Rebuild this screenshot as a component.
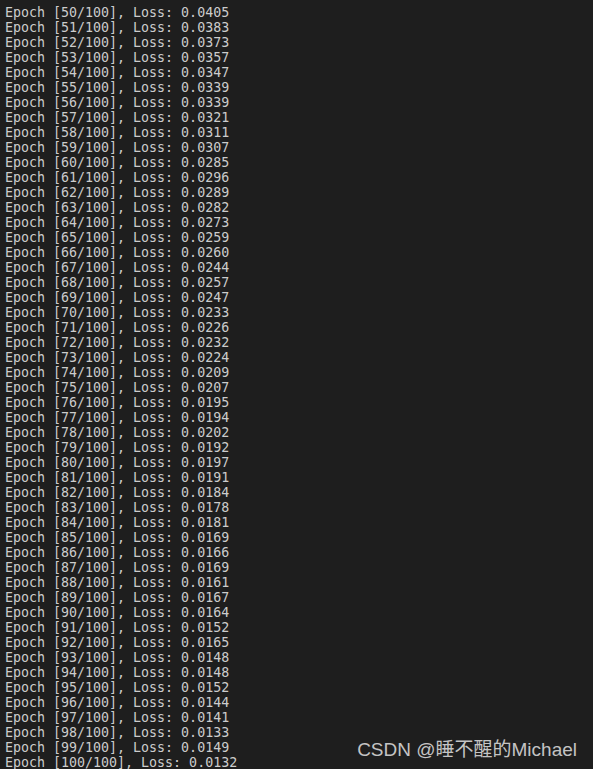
const losses = [
  '0.0405', '0.0383', '0.0373', '0.0357', '0.0347', '0.0339', '0.0339', '0.0321', '0.0311', '0.0307',
  '0.0285', '0.0296', '0.0289', '0.0282', '0.0273', '0.0259', '0.0260', '0.0244', '0.0257', '0.0247',
  '0.0233', '0.0226', '0.0232', '0.0224', '0.0209', '0.0207', '0.0195', '0.0194', '0.0202', '0.0192',
  '0.0197', '0.0191', '0.0184', '0.0178', '0.0181', '0.0169', '0.0166', '0.0169', '0.0161', '0.0167',
  '0.0164', '0.0152', '0.0165', '0.0148', '0.0148', '0.0152', '0.0144', '0.0141', '0.0133', '0.0149',
  '0.0132'
]

export default function App() {
  return (
    <div className="relative h-[769px] w-[593px] overflow-hidden bg-[#1e1e1e]">
      <pre className="pl-[5px] pt-[5px] font-['DejaVu_Sans_Mono',monospace] text-[13.3px] leading-[15px] text-[#cccccc]">
        {losses.map((loss, i) => (
          <div key={i}>{`Epoch [${50 + i}/100], Loss: ${loss}`}</div>
        ))}
      </pre>
      <div className="absolute bottom-[8px] right-[16px] font-['Liberation_Sans','Noto_Sans_CJK_SC',sans-serif] text-[19px] leading-[22px] text-[#c4c4c4]">
        CSDN @睡不醒的Michael
      </div>
    </div>
  )
}
